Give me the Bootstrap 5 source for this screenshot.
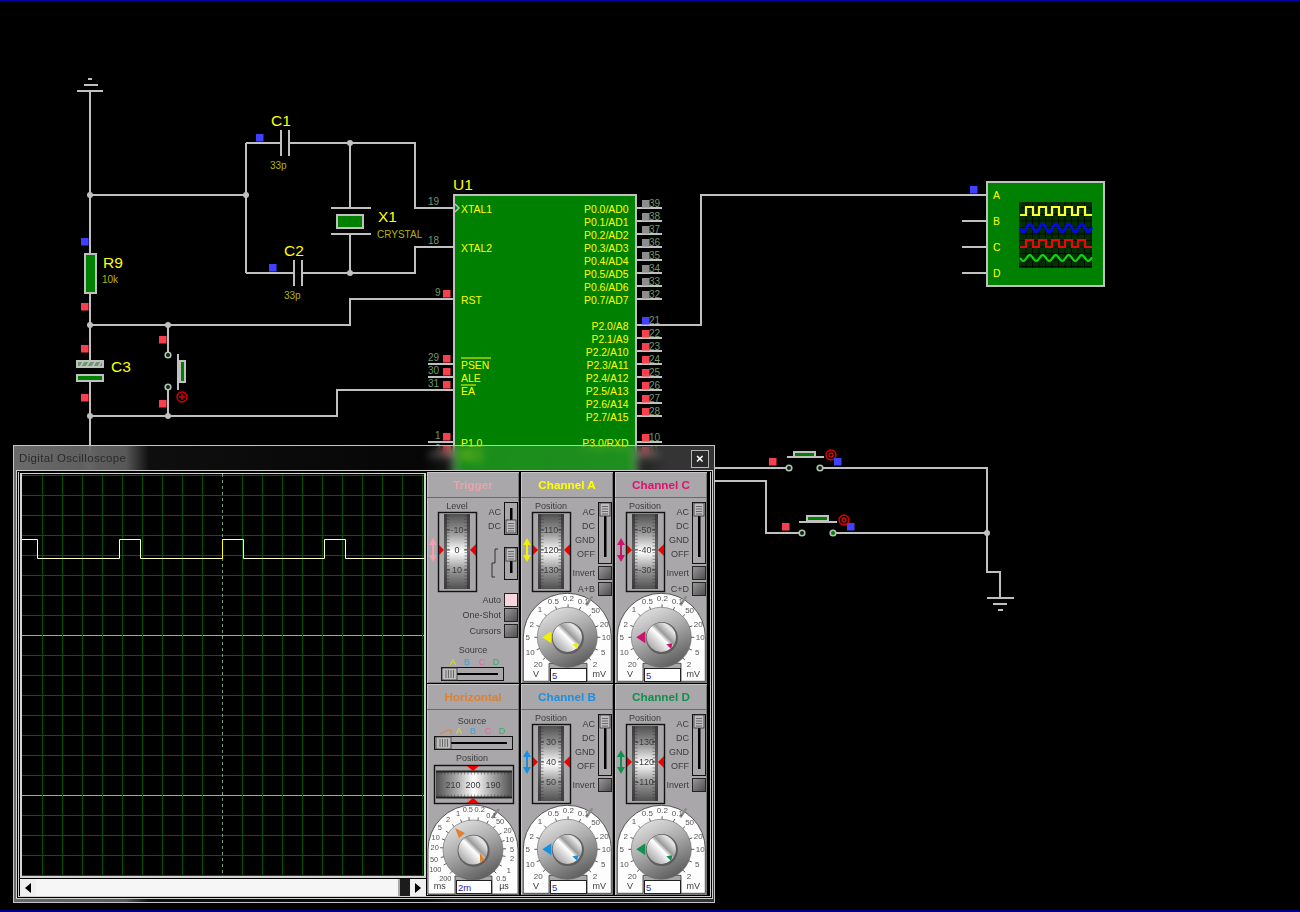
<!DOCTYPE html>
<html lang="en">
<head>
<meta charset="utf-8">
<title>Digital Oscilloscope</title>
<link href="https://cdn.jsdelivr.net/npm/bootstrap@5.3.3/dist/css/bootstrap.min.css" rel="stylesheet">
<style>
	body { background: #000; overflow: hidden; }
	.sim-page { width: 1300px; height: 912px; background: #000; box-shadow: inset 0 1px #0000a8, inset 0 -2px #000090; }
	svg text { font-family: "Liberation Sans", Arial, sans-serif; }

	/* schematic */
	.wire { fill: none; stroke: #c0c0c0; stroke-width: 2; }
	.part { fill: #008000; stroke: #c0c0c0; stroke-width: 2; }
	.ref { fill: #ffff00; font-size: 15.5px; }
	.val { fill: #b4b400; font-size: 10px; }
	.pinlbl { fill: #ffff00; font-size: 10.4px; }
	.pinno { fill: #6f9a6f; font-size: 10px; }

	/* scope window */
	.scope-win { left: 13px; top: 445px; width: 702px; height: 458px; border: 1px solid #c4c4c4; backdrop-filter: blur(4px);
		background: linear-gradient(90deg, rgba(125,125,125,.85) 0, rgba(110,110,110,.8) 112px, rgba(24,24,24,.6) 135px, rgba(20,20,20,.3) 410px, rgba(255,255,255,.1) 440px, rgba(255,255,255,.12) 620px, rgba(70,70,70,.75) 655px, rgba(64,64,64,.8) 100%); }
	.scope-title { height: 24px; padding: 0 5px; font: 11.5px "Liberation Sans", Arial, sans-serif; letter-spacing: .35px; color: #2a2a2a; }
	.scope-close { width: 18px; height: 18px; border: 1px solid #b4b4b4; background: #2a2a2a; color: #fff; font: bold 13px/15px "Liberation Sans", Arial, sans-serif; text-align: center; margin-top: 2px; }
	.scope-body { margin: 0 1px 2px 2px; border: 1px solid #cfcfcf; padding: 1px; background: #000; height: 429px; }
	.scope-inner { border: 1px solid #cfcfcf; border-top: 0; height: 100%; padding: 0 3px 0 1px; gap: 1px; }
	.scope-left { width: 406px; padding-top: 1px; }
	.scope-screen { width: 406px; height: 405px; border: solid #d4d4d4; border-width: 1px 2px 2px 2px; }
	.scope-screen svg { display: block; }
	.scope-scroll { height: 17px; margin-top: 1px; }
	.scroll-btn { width: 16px; background: #f0f0f0; }
	.scroll-thumb { background: #f6f6f6; border-right: 2px solid #aaa; }
	.scroll-gap { width: 10px; background: #1c1c1c; }
	.scope-panels { display: grid; grid-template-columns: repeat(3, 92px); grid-template-rows: 211px 211px; column-gap: 2px; row-gap: 1px; }
	.scope-panel { background: #a9a7a9; box-shadow: inset 1px 1px #c6c6c6, inset -1px -1px #777; }
	.panel-head { height: 26px; font: bold 11.7px/25px "Liberation Sans", Arial, sans-serif; text-align: center; border-bottom: 1px solid #6a6a6a; }
	.scope-panel svg { display: block; }
	.scope-panel text { font-size: 9px; fill: #3c3c3c; }
	.scope-panel text.dial { font-size: 8px; fill: #555; }
	.scope-panel text.dial-sm { font-size: 7.4px; fill: #555; }
	.scope-panel text.boxval { fill: #2828a8; font-size: 9.5px; }
</style>
</head>
<body>
<svg width="0" height="0" class="position-absolute">
	<defs>
		<linearGradient id="drumV" x1="0" y1="0" x2="0" y2="1">
			<stop offset="0" stop-color="#505050"/><stop offset=".28" stop-color="#a2a2a2"/><stop offset=".5" stop-color="#fff"/><stop offset=".72" stop-color="#a2a2a2"/><stop offset="1" stop-color="#505050"/>
		</linearGradient>
		<linearGradient id="drumH" x1="0" y1="0" x2="1" y2="0">
			<stop offset="0" stop-color="#505050"/><stop offset=".25" stop-color="#a2a2a2"/><stop offset=".5" stop-color="#fff"/><stop offset=".75" stop-color="#a2a2a2"/><stop offset="1" stop-color="#505050"/>
		</linearGradient>
		<linearGradient id="knobDisc" x1=".2" y1="0" x2=".7" y2="1">
			<stop offset="0" stop-color="#e4e4e4"/><stop offset=".45" stop-color="#acacac"/><stop offset="1" stop-color="#5a5a5a"/>
		</linearGradient>
		<linearGradient id="knobCap" x1="0" y1="1" x2="1" y2="0">
			<stop offset="0" stop-color="#8c8c8c"/><stop offset=".35" stop-color="#d8d8d8"/><stop offset=".5" stop-color="#fff"/><stop offset=".6" stop-color="#9a9a9a"/><stop offset=".8" stop-color="#e8e8e8"/><stop offset="1" stop-color="#8a8a8a"/>
		</linearGradient>
		<linearGradient id="btnDark" x1="0" y1="0" x2="1" y2="1">
			<stop offset="0" stop-color="#9a9a9a"/><stop offset="1" stop-color="#4c4c4c"/>
		</linearGradient>
	</defs>
</svg>

<div class="sim-page position-relative overflow-hidden">
	<!-- schematic canvas -->
	<svg id="schematic" class="position-absolute top-0 start-0" width="1300" height="912" viewBox="0 0 1300 912">
		<path class="wire" d="M90 91V253M90 293V360M90 382V480M90 195H246M246 143V273M246 143H281M289 143H415V208H455M350 143V208M350 234V273M246 273H294M302 273H415V247H455M90 325H350V299H455M168 325V355M168 387V416M90 416H337V390H455"/>
		<path class="wire" d="M637 325H701V195H987M715 468H786M823 468H987V572H1000V598M715 481H766V533H799M836 533H987"/>
		<!-- power and ground -->
		<path class="wire" d="M77 91H103M84 85H98M88 79H92M987 598H1014M993 604H1007M998 610H1003"/>
		<!-- caps and crystal -->
		<path class="wire" d="M281 130V156M289 130V156M294 260V286M302 260V286M331 208H371M331 234H371"/>
		<rect class="part" x="337" y="215" width="26" height="13"/>
		<rect class="part" x="85" y="254" width="11" height="39"/>
		<rect class="part" x="77" y="361" width="26" height="6" style="fill:#6a9a6a"/>
		<path d="M80 367l4-6M86 367l4-6M92 367l4-6M98 367l4-6" stroke="#c0c0c0" stroke-width="1.5"/>
		<rect class="part" x="77" y="375" width="26" height="6"/>
		<!-- push buttons -->
		<path class="wire" d="M178 354V390M787 457H824M799 522H837"/>
		<rect class="part" x="180" y="361" width="5" height="21"/>
		<rect class="part" x="794" y="452" width="21" height="5"/>
		<rect class="part" x="807" y="516" width="21" height="5"/>
		<g fill="#102010" stroke="#b0c4b4" stroke-width="1.6">
			<circle cx="168" cy="355" r="2.8"/><circle cx="168" cy="387" r="2.8"/><circle cx="789" cy="468" r="2.8"/><circle cx="820" cy="468" r="2.8"/><circle cx="802" cy="533" r="2.8"/><circle cx="833" cy="533" r="2.8" fill="#008000"/>
		</g>
		<g fill="none" stroke="#e00000" stroke-width="1.4">
			<circle cx="182" cy="397" r="5"/><path d="M179 397h6M182 394v6"/>
			<circle cx="831" cy="455" r="5"/><circle cx="831" cy="455" r="2"/>
			<circle cx="844" cy="520" r="5"/><circle cx="844" cy="520" r="2"/>
		</g>
		<!-- junctions -->
		<g fill="#c0c0c0">
			<circle cx="90" cy="195" r="3"/><circle cx="246" cy="195" r="3"/><circle cx="350" cy="143" r="3"/><circle cx="350" cy="273" r="3"/>
			<circle cx="90" cy="325" r="3"/><circle cx="168" cy="325" r="3"/><circle cx="90" cy="416" r="3"/><circle cx="168" cy="416" r="3"/><circle cx="987" cy="533" r="3"/>
		</g>
		<!-- microcontroller -->
		<rect class="part" x="454" y="195" width="182" height="320"/>
		<g id="chip"></g>
		<!-- logic analyser symbol -->
		<rect class="part" x="987" y="182" width="117" height="104"/>
		<rect x="1019" y="202" width="73" height="66" fill="#033003"/>
		<g id="analyser"></g>
		<!-- labels -->
		<text class="ref" x="271" y="126">C1</text><text class="val" x="270" y="169">33p</text>
		<text class="ref" x="284" y="256">C2</text><text class="val" x="284" y="299">33p</text>
		<text class="ref" x="378" y="222">X1</text><text class="val" x="377" y="238">CRYSTAL</text>
		<text class="ref" x="103" y="268">R9</text><text class="val" x="102" y="283">10k</text>
		<text class="ref" x="111" y="372">C3</text>
		<text class="ref" x="453" y="190">U1</text>
	</svg>

	<!-- oscilloscope window -->
	<div class="scope-win position-absolute">
		<div class="scope-title d-flex align-items-center justify-content-between">
			<span>Digital Oscilloscope</span>
			<div class="scope-close">×</div>
		</div>
		<div class="scope-body">
			<div class="scope-inner d-flex">
				<div class="scope-left d-flex flex-column">
					<div class="scope-screen">
						<svg id="screen" width="402" height="402" viewBox="0 0 402 402"></svg>
					</div>
					<div class="scope-scroll d-flex">
						<div class="scroll-btn d-flex align-items-center justify-content-center"><svg width="6" height="10"><polygon points="6,0 0,5 6,10" fill="#000"/></svg></div>
						<div class="scroll-thumb flex-grow-1"></div>
						<div class="scroll-gap"></div>
						<div class="scroll-btn d-flex align-items-center justify-content-center"><svg width="6" height="10"><polygon points="0,0 6,5 0,10" fill="#000"/></svg></div>
					</div>
				</div>
				<div class="scope-panels" id="panels"></div>
			</div>
		</div>
	</div>
</div>

<script src="https://cdn.jsdelivr.net/npm/bootstrap@5.3.3/dist/js/bootstrap.bundle.min.js"></script>
<script>
	// schematic pins, only the repeated bits
	function sq(x, y, c) { return '<rect x="' + x + '" y="' + y + '" width="7.5" height="7.5" fill="' + c + '"/>'; }
	var RED = '#f5404e', BLUE = '#4040ff', GREY = '#8c8c8c';
	var s = '';
	function pinR(y, no, c, lbl) {
		s += '<path class="wire" d="M637 ' + y + 'H662"/>' + sq(642, y - 8, c);
		s += '<text class="pinno" x="649" y="' + (y - 1) + '">' + no + '</text>';
		if (lbl) s += '<text class="pinlbl" x="628.5" y="' + (y + 5) + '" text-anchor="end">' + lbl + '</text>';
	}
	for (var i = 0; i < 8; i++) pinR(208 + 13 * i, 39 - i, GREY, 'P0.' + i + '/AD' + i);
	for (var i = 0; i < 8; i++) pinR(325 + 13 * i, 21 + i, i == 0 ? BLUE : RED, 'P2.' + i + '/A' + (8 + i));
	pinR(442, 10, RED, 'P3.0/RXD');
	pinR(455, 11, RED, '');
	function pinL(y, no, x, lbl, ly) {
		s += '<path class="wire" d="M428 ' + y + 'H455"/>';
		s += '<text class="pinno" x="' + x + '" y="' + (y - 3) + '">' + no + '</text>';
		if (no != 19 && no != 18) s += sq(443, y - 9, RED);
		s += '<text class="pinlbl" x="461" y="' + ly + '">' + lbl + '</text>';
	}
	pinL(208, 19, 428, 'XTAL1', 213);
	pinL(247, 18, 428, 'XTAL2', 252);
	pinL(299, 9, 435, 'RST', 304);
	pinL(364, 29, 428, 'PSEN', 369);
	pinL(377, 30, 428, 'ALE', 382);
	pinL(390, 31, 428, 'EA', 395);
	pinL(442, 1, 435, 'P1.0', 447);
	pinL(455, 2, 435, 'P1.1', 460);
	s += '<path d="M461 358H491M461 385H476" stroke="#ffff00"/>';
	s += '<polyline points="455,204 459,208 455,212" fill="none" stroke="#c0c0c0" stroke-width="1.5"/>';
	s += sq(256, 134, BLUE) + sq(269, 264, BLUE) + sq(81, 238, BLUE) + sq(970, 186, BLUE) + sq(834, 458, BLUE) + sq(847, 523, BLUE);
	s += sq(81, 303, RED) + sq(81, 345, RED) + sq(81, 394, RED) + sq(159, 336, RED) + sq(159, 400, RED) + sq(769, 458, RED) + sq(782, 523, RED);
	document.getElementById('chip').innerHTML = s;

	// logic analyser symbol
	var a = '';
	for (var i = 0; i < 4; i++) {
		a += '<path class="wire" d="M962 ' + (195 + 26 * i) + 'H987"/>';
		a += '<text class="pinlbl" x="993" y="' + (199 + 26 * i) + '">' + 'ABCD'[i] + '</text>';
	}
	for (var x = 1026; x < 1092; x += 6.5) a += '<path d="M' + x + ' 202v66" stroke="#000" stroke-width=".7"/>';
	for (var y = 208; y < 268; y += 6.5) a += '<path d="M1019 ' + y + 'h73" stroke="#000" stroke-width=".7"/>';
	function square(y1, y0, col) {
		var p = '1020,' + y0 + ' ';
		for (var x = 1026; x < 1086; x += 13) p += x + ',' + y0 + ' ' + x + ',' + y1 + ' ' + (x + 7) + ',' + y1 + ' ' + (x + 7) + ',' + y0 + ' ';
		return '<polyline points="' + p + '1092,' + y0 + '" fill="none" stroke="' + col + '" stroke-width="2.2"/>';
	}
	function wave(yc, amp, col, sw) {
		var p = '';
		for (var x = 1020; x <= 1092; x += 1) p += x + ',' + (yc + amp * Math.sin((x - 1020) / 13 * 6.283)) + ' ';
		return '<polyline points="' + p + '" fill="none" stroke="' + col + '" stroke-width="' + sw + '"/>';
	}
	a += square(207, 215, '#ffff30') + wave(228, 4, '#0808e8', 2.8) + square(240, 247, '#e80808') + wave(258, 3, '#10d810', 2.2);
	document.getElementById('analyser').innerHTML = a;

	// scope screen
	var g = '';
	for (var i = 0; i < 21; i++) {
		var y = 1 + 20 * i;
		var major = (y == 161 || y == 321);
		g += '<line x1="0" x2="402" y1="' + y + '.5" y2="' + y + '.5" stroke="' + (major ? '#a8a890' : '#383830') + '"/>';
	}
	for (var i = 0; i < 20; i++) {
		var x = 20.5 + 20 * i;
		if (x == 200.5) g += '<line x1="' + x + '" x2="' + x + '" y1="0" y2="402" stroke="#7aa07a" stroke-dasharray="3 3"/>';
		else g += '<line x1="' + x + '" x2="' + x + '" y1="0" y2="402" stroke="#005400"/>';
	}
	g += '<polyline fill="none" stroke="#ffffc8" stroke-width="1" points="0,65.5 15.5,65.5 15.5,84.5 97.5,84.5 97.5,65.5 118.5,65.5 118.5,84.5 200.5,84.5 200.5,65.5 221.5,65.5 221.5,84.5 302.5,84.5 302.5,65.5 323.5,65.5 323.5,84.5 402,84.5"/>';
	g += '<line x1="200.5" x2="200.5" y1="65" y2="85" stroke="#ffff00"/>';
	document.getElementById('screen').innerHTML = g;

	// instrument panels
	function t(x, y, str, anchor, cls, fill) {
		return '<text x="' + x + '" y="' + y + '" text-anchor="' + (anchor || 'middle') + '"' + (cls ? ' class="' + cls + '"' : '') + (fill ? ' style="fill:' + fill + '"' : '') + '>' + str + '</text>';
	}
	function button(x, y, pink) {
		return '<rect x="' + x + '.5" y="' + y + '.5" width="13" height="13" fill="' + (pink ? '#fad4dc' : 'url(#btnDark)') + '" stroke="#222"/>';
	}
	function thumb(x, y, w, h, horiz) {
		var o = '<rect x="' + x + '" y="' + y + '" width="' + w + '" height="' + h + '" fill="#bdbdbd" stroke="#333" stroke-width=".8"/>';
		for (var i = 0; i < 4; i++) {
			if (horiz) o += '<path d="M' + (x + 4 + i * 2.5) + ' ' + (y + 2) + 'v' + (h - 4) + '" stroke="#444" stroke-width=".7"/>';
			else o += '<path d="M' + (x + 2) + ' ' + (y + 3.5 + i * 2.5) + 'h' + (w - 4) + '" stroke="#444" stroke-width=".7"/>';
		}
		return o;
	}
	function sliderV(y, h, thumbY) {
		return '<rect x="77.5" y="' + y + '.5" width="13" height="' + h + '" fill="#a9a7a9" stroke="#111"/>' +
			'<rect x="83" y="' + (y + 6) + '" width="2.5" height="' + (h - 12) + '" fill="#000"/>' + thumb(79, thumbY, 10, 13);
	}
	function drum(labels) {
		var o = '<rect x="11.5" y="14.5" width="38" height="79" fill="#a9a7a9" stroke="#111" stroke-width="1.4"/>';
		o += '<rect x="17" y="16" width="26" height="75" fill="url(#drumV)"/><path d="M18.5 16v75M41.5 16v75" stroke="#333" stroke-width="3" opacity=".75"/>';
		for (var y = 18; y < 90; y += 3.33) o += '<path d="M20 ' + y + 'h2.5M40 ' + y + 'h-2.5" stroke="#333" stroke-width=".5"/>';
		[32, 52, 72].forEach(function (y, i) {
			o += '<path d="M20 ' + y + 'h3M40 ' + y + 'h-3" stroke="#222" stroke-width=".8"/>' + t(30, y + 3.2, labels[i]);
		});
		o += '<polygon points="12,47 17,52 12,57" fill="#ee0000"/><polygon points="49,46 43,52 49,58" fill="#ee0000"/>';
		return o;
	}
	function dblArrow(col) {
		return '<path d="M6 44V60" stroke="' + col + '" stroke-width="2"/><polygon points="6,40 2,47 10,47" fill="' + col + '"/><polygon points="6,64 2,57 10,57" fill="' + col + '"/>';
	}
	function ticks(list, r1, r2) {
		var o = '';
		list.forEach(function (l) {
			var d = Math.hypot(l[0], l[1]), ux = l[0] / d, uy = l[1] / d;
			o += '<line x1="' + ux * r1 + '" y1="' + uy * r1 + '" x2="' + ux * r2 + '" y2="' + uy * r2 + '" stroke="#333" stroke-width=".8"/>';
		});
		return o;
	}
	function knob(cx, cy, R, labels, units, boxX, boxW, boxVal, col, horiz) {
		var o = '<g transform="translate(' + cx + ' ' + cy + ')">';
		var bl = boxX - cx - 1, br = boxX + boxW - cx + 1;
		o += '<path d="M' + (-R) + ' 44V0A' + R + ' ' + R + ' 0 0 1 ' + R + ' 0V44H' + br + 'V26H' + bl + 'V44Z" fill="#fdfdfd" stroke="#333" stroke-width=".8"/>';
		o += '<line x1="19" y1="-32" x2="' + (horiz ? 26 : 25) + '" y2="-41" stroke="#8a8a8a" stroke-width="2.4"/>';
		labels.forEach(function (l) { o += t(l[0], l[1] + 3, l[2], 'middle', horiz ? 'dial-sm' : 'dial'); });
		units.forEach(function (l) { o += t(l[0], l[1] + 3.5, l[2]); });
		o += ticks(labels, 29, 33);
		o += '<circle r="30" fill="url(#knobDisc)" stroke="#666" stroke-width=".6"/>';
		o += '<circle r="16" fill="#5e5e5e" cx=".6" cy=".8"/><circle r="14.6" fill="url(#knobCap)"/>';
		if (horiz) o += '<polygon points="-18,-22 -8,-17 -14,-12" fill="' + col + '"/><polygon points="12,10 7,12 7,3" fill="' + col + '"/>';
		else o += '<polygon points="-25,0 -16,-6 -16,6" fill="' + col + '"/><polygon points="5,7 11,6 10,12" fill="' + col + '"/>';
		o += '</g>';
		o += '<rect x="' + boxX + '.5" y="170.5" width="' + boxW + '" height="13" fill="#fff" stroke="#222"/>';
		o += t(boxX + 2, 180.5, boxVal, 'start', 'boxval');
		return o;
	}
	var volts = [[-14, -36.3, '0.5'], [1, -39.7, '0.2'], [16, -36.3, '0.1'], [-27.3, -28, '1'], [-35.7, -13.7, '2'], [-39.7, 0, '5'], [-37, 15, '10'], [-29, 26.7, '20'],
		[28.3, -27.3, '50'], [37, -13.7, '20'], [39, 0, '10'], [36, 15, '5'], [27.7, 26.7, '2']];
	var times = [[18.5, -35.5, '0.1'], [6.7, -40.7, '0.2'], [-5.2, -41, '0.5'], [-15, -36.7, '1'], [-25, -31, '2'], [-33.3, -23.3, '5'], [-37.3, -13.3, '10'], [-38.3, -2.7, '20'], [-39, 9, '50'], [-37.7, 19.3, '100'], [-27.7, 28.3, '200'],
		[27, -29, '50'], [34.5, -20.5, '20'], [36.7, -11, '10'], [39, -1.5, '5'], [39, 7.7, '2'], [35.7, 20, '1'], [28.3, 28.3, '0.5']];

	function channelBody(col, labels, extra) {
		var o = t(30, 11, 'Position') + drum(labels) + dblArrow(col);
		['AC', 'DC', 'GND', 'OFF'].forEach(function (l, i) { o += t(74, 17 + 14 * i, l, 'end'); });
		o += sliderV(4, 61, 5);
		o += t(74, 78, 'Invert', 'end') + button(77, 68);
		if (extra) o += t(74, 94, extra, 'end') + button(77, 84);
		o += knob(46.3, 139.3, 44, volts, [[-31.3, 36.7, 'V'], [32, 36.7, 'mV']], 29, 36, '5', col, false);
		return o;
	}
	function triggerBody() {
		var o = t(30, 11, 'Level') + drum(['-10', '0', '10']) + dblArrow('#f0a0b0');
		o += t(74, 17, 'AC', 'end') + t(74, 31, 'DC', 'end');
		o += sliderV(4, 32, 22) + sliderV(49, 32, 50);
		o += '<path d="M71 51h-3v14h-3v14h3" fill="none" stroke="#333"/>';
		[['Auto', 95, true], ['One-Shot', 110], ['Cursors', 126]].forEach(function (b) {
			o += t(74, b[1] + 10, b[0], 'end') + button(77, b[1], b[2]);
		});
		o += t(46, 155, 'Source');
		[['A', '#e0e020', 26], ['B', '#40a0e0', 40], ['C', '#f060a0', 55], ['D', '#30b070', 69]].forEach(function (l) { o += t(l[2], 167, l[0], 'middle', '', l[1]); });
		o += '<rect x="14.5" y="169.5" width="62" height="13" fill="#a9a7a9" stroke="#111"/><rect x="30" y="175" width="41" height="2" fill="#000"/>' + thumb(15, 170, 15, 12, true);
		return o;
	}
	function horizBody() {
		var o = t(45, 14, 'Source');
		o += '<path d="M13 24l8-4h3v4" fill="none" stroke="#e08030"/>';
		[['A', '#e0e020', 32], ['B', '#40a0e0', 46], ['C', '#f060a0', 61], ['D', '#30b070', 75]].forEach(function (l) { o += t(l[2], 24, l[0], 'middle', '', l[1]); });
		o += '<rect x="7.5" y="26.5" width="78" height="13" fill="#a9a7a9" stroke="#111"/><rect x="24" y="32" width="56" height="2" fill="#000"/>' + thumb(9, 27, 15, 12, true);
		o += t(45, 51, 'Position');
		o += '<rect x="7.5" y="55.5" width="79" height="38" fill="#a9a7a9" stroke="#111" stroke-width="1.4"/><rect x="9" y="61" width="76" height="27" fill="url(#drumH)"/><path d="M9 61.5h76M9 87.5h76" stroke="#222" stroke-width="2"/>';
		for (var x = 11; x < 84; x += 3.33) o += '<path d="M' + x + ' 62v2.5M' + x + ' 87v-2.5" stroke="#333" stroke-width=".5"/>';
		o += t(26, 77.5, '210') + t(46, 77.5, '200') + t(66, 77.5, '190');
		o += '<polygon points="40,56 52,56 46,61" fill="#ee0000"/><polygon points="40,93 52,93 46,88" fill="#ee0000"/>';
		o += knob(46, 140, 45, times, [[-33.3, 35.7, 'ms'], [31, 35.7, 'µs']], 29, 35, '2m', '#e08030', true);
		return o;
	}
	var panels = [
		['Trigger', '#e8a4ac', triggerBody()],
		['Channel A', '#ffff00', channelBody('#f0f000', ['110', '120', '130'], 'A+B')],
		['Channel C', '#e01070', channelBody('#d0106c', ['-50', '-40', '-30'], 'C+D')],
		['Horizontal', '#e08030', horizBody()],
		['Channel B', '#2090e0', channelBody('#1890e0', ['30', '40', '50'])],
		['Channel D', '#109050', channelBody('#109050', ['-130', '-120', '-110'])]
	];
	document.getElementById('panels').innerHTML = panels.map(function (p) {
		return '<div class="scope-panel"><div class="panel-head" style="color:' + p[1] + '">' + p[0] + '</div><svg width="92" height="185" viewBox="0 0 92 185">' + p[2] + '</svg></div>';
	}).join('');
</script>
</body>
</html>
